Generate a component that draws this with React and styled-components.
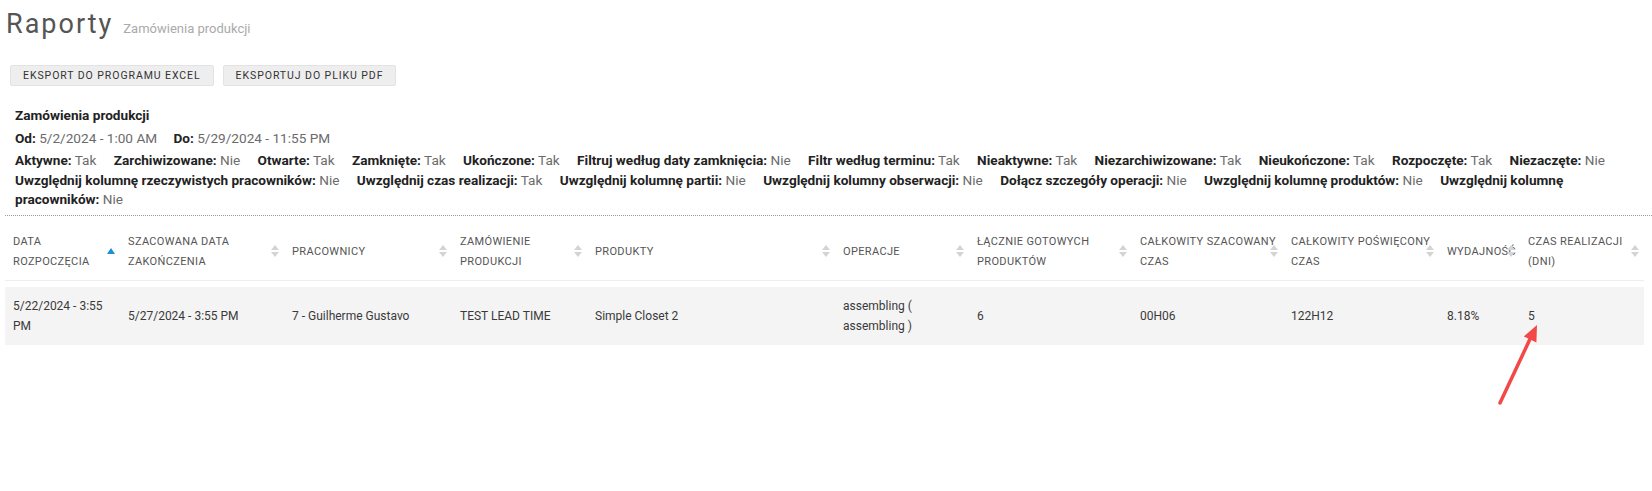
import styled, { createGlobalStyle } from "styled-components";

const GlobalStyle = createGlobalStyle`
  body {
    margin: 0;
    background: #fff;
    font-family: Roboto, "Liberation Sans", sans-serif;
    color: #333;
  }
`;

const Page = styled.div`
  position: relative;
  padding: 0 0 120px 5px;
`;

const TitleRow = styled.div`
  display: flex;
  align-items: baseline;
  gap: 10px;
  padding: 8px 0 0 1px;
`;

const Title = styled.h1`
  margin: 0;
  font-size: 27px;
  line-height: 32px;
  font-weight: 400;
  letter-spacing: 2px;
  color: #555;
`;

const Subtitle = styled.small`
  font-size: 13px;
  color: #aaa;
`;

const Toolbar = styled.div`
  display: flex;
  gap: 9px;
  margin: 25px 0 0 5px;
`;

const ExportButton = styled.button`
  height: 21px;
  padding: 0 12px;
  border: 1px solid #e3e3e3;
  border-radius: 2px;
  background: #eeeeee;
  color: #333;
  font-family: Roboto, "Liberation Sans", sans-serif;
  font-size: 10.5px;
  letter-spacing: 0.93px;
  text-transform: uppercase;
  cursor: pointer;
`;

const Info = styled.div`
  margin: 19px 0 0 10px;
  font-size: 13.6px;
  color: #222;
`;

const InfoTitle = styled.div`
  font-weight: 700;
  line-height: 20px;
  margin-bottom: 3px;
`;

const InfoLine = styled.div`
  line-height: ${(p) => p.$lh || "20px"};
  margin-bottom: 3px;
  padding-right: 10px;
`;

const Item = styled.span`
  margin-right: ${(p) => p.$gap || "14px"};

  b {
    font-weight: 700;
  }
`;

const Value = styled.span`
  color: #6b6b6b;
`;

const Dotted = styled.div`
  border-top: 1px dotted #9a9a9a;
  margin: 5px 0 7px;
`;

const Table = styled.table`
  width: 1639px;
  table-layout: fixed;
  border-collapse: collapse;
  margin-top: ${(p) => p.$offset || 0};
`;

const Th = styled.th`
  position: relative;
  padding: 9px 0 8px 8px;
  border-bottom: 1px solid #eeeeee;
  text-align: left;
  vertical-align: middle;
  font-size: 11px;
  font-weight: 400;
  line-height: 20px;
  letter-spacing: 0.35px;
  text-transform: uppercase;
  color: #555;
`;

const SortIcon = styled.svg`
  position: absolute;
  right: 5px;
  top: 50%;
  transform: translateY(-50%);
`;

const Row = styled.tr`
  background: #f4f4f4;
`;

const Td = styled.td`
  padding: 9px 8px;
  vertical-align: middle;
  font-size: 12px;
  line-height: 20px;
  color: #3a3a3a;
`;

const Annotation = styled.svg`
  position: absolute;
  left: 1490px;
  top: 315px;
  width: 60px;
  height: 100px;
  overflow: visible;
  pointer-events: none;
`;

const widths = [115, 164, 168, 135, 248, 134, 163, 151, 156, 81, 124];

const columns = [
  { label: "Data rozpoczęcia", sort: "asc" },
  { label: "Szacowana data zakończenia" },
  { label: "Pracownicy" },
  { label: "Zamówienie produkcji" },
  { label: "Produkty" },
  { label: "Operacje" },
  { label: "Łącznie gotowych produktów" },
  { label: "Całkowity szacowany czas" },
  { label: "Całkowity poświęcony czas" },
  { label: "Wydajność" },
  { label: "Czas realizacji (dni)" },
];

const rows = [
  [
    "5/22/2024 - 3:55 PM",
    "5/27/2024 - 3:55 PM",
    "7 - Guilherme Gustavo",
    "TEST LEAD TIME",
    "Simple Closet 2",
    "assembling ( assembling )",
    "6",
    "00H06",
    "122H12",
    "8.18%",
    "5",
  ],
];

const filters = [
  ["Aktywne", "Tak"],
  ["Zarchiwizowane", "Nie"],
  ["Otwarte", "Tak"],
  ["Zamknięte", "Tak"],
  ["Ukończone", "Tak"],
  ["Filtruj według daty zamknięcia", "Nie"],
  ["Filtr według terminu", "Tak"],
  ["Nieaktywne", "Tak"],
  ["Niezarchiwizowane", "Tak"],
  ["Nieukończone", "Tak"],
  ["Rozpoczęte", "Tak"],
  ["Niezaczęte", "Nie"],
  ["Uwzględnij kolumnę rzeczywistych pracowników", "Nie"],
  ["Uwzględnij czas realizacji", "Tak"],
  ["Uwzględnij kolumnę partii", "Nie"],
  ["Uwzględnij kolumny obserwacji", "Nie"],
  ["Dołącz szczegóły operacji", "Nie"],
  ["Uwzględnij kolumnę produktów", "Nie"],
  ["Uwzględnij kolumnę pracowników", "Nie"],
];

function Sort({ dir }) {
  if (dir === "asc") {
    return (
      <SortIcon width="8" height="14" viewBox="0 0 8 14">
        <path d="M0 10 L4 4 L8 10 Z" fill="#1d8fd8" />
      </SortIcon>
    );
  }
  return (
    <SortIcon width="8" height="14" viewBox="0 0 8 14">
      <path d="M0 6 L4 1 L8 6 Z" fill="#d4d4d4" />
      <path d="M0 8 L4 13 L8 8 Z" fill="#d4d4d4" />
    </SortIcon>
  );
}

function Cols() {
  return (
    <colgroup>
      {widths.map((w, i) => (
        <col key={i} style={{ width: w }} />
      ))}
    </colgroup>
  );
}

export default function App() {
  return (
    <>
      <GlobalStyle />
      <Page>
        <TitleRow>
          <Title>Raporty</Title>
          <Subtitle>Zamówienia produkcji</Subtitle>
        </TitleRow>

        <Toolbar>
          <ExportButton>Eksport do programu Excel</ExportButton>
          <ExportButton>Eksportuj do pliku PDF</ExportButton>
        </Toolbar>

        <Info>
          <InfoTitle>Zamówienia produkcji</InfoTitle>
          <InfoLine>
            <Item $gap="13px">
              <b>Od:</b> <Value>5/2/2024 - 1:00 AM</Value>
            </Item>{" "}
            <Item>
              <b>Do:</b> <Value>5/29/2024 - 11:55 PM</Value>
            </Item>
          </InfoLine>
          <InfoLine $lh="19.5px">
            {filters.map(([label, value]) => (
              <span key={label}>
                <Item>
                  <b>{label}:</b> <Value>{value}</Value>
                </Item>{" "}
              </span>
            ))}
          </InfoLine>
        </Info>

        <Dotted />

        <Table>
          <Cols />
          <thead>
            <tr>
              {columns.map((c) => (
                <Th key={c.label}>
                  {c.label}
                  <Sort dir={c.sort} />
                </Th>
              ))}
            </tr>
          </thead>
        </Table>

        <Table $offset="6px">
          <Cols />
          <tbody>
            {rows.map((r, i) => (
              <Row key={i}>
                {r.map((cell, j) => (
                  <Td key={j}>{cell}</Td>
                ))}
              </Row>
            ))}
          </tbody>
        </Table>

        <Annotation viewBox="0 0 60 100">
          <line x1="10" y1="88" x2="40" y2="24" stroke="#f24848" strokeWidth="3.5" strokeLinecap="round" />
          <path d="M47 10 L46.4 27.5 L33.8 21.5 Z" fill="#f24848" />
        </Annotation>
      </Page>
    </>
  );
}
